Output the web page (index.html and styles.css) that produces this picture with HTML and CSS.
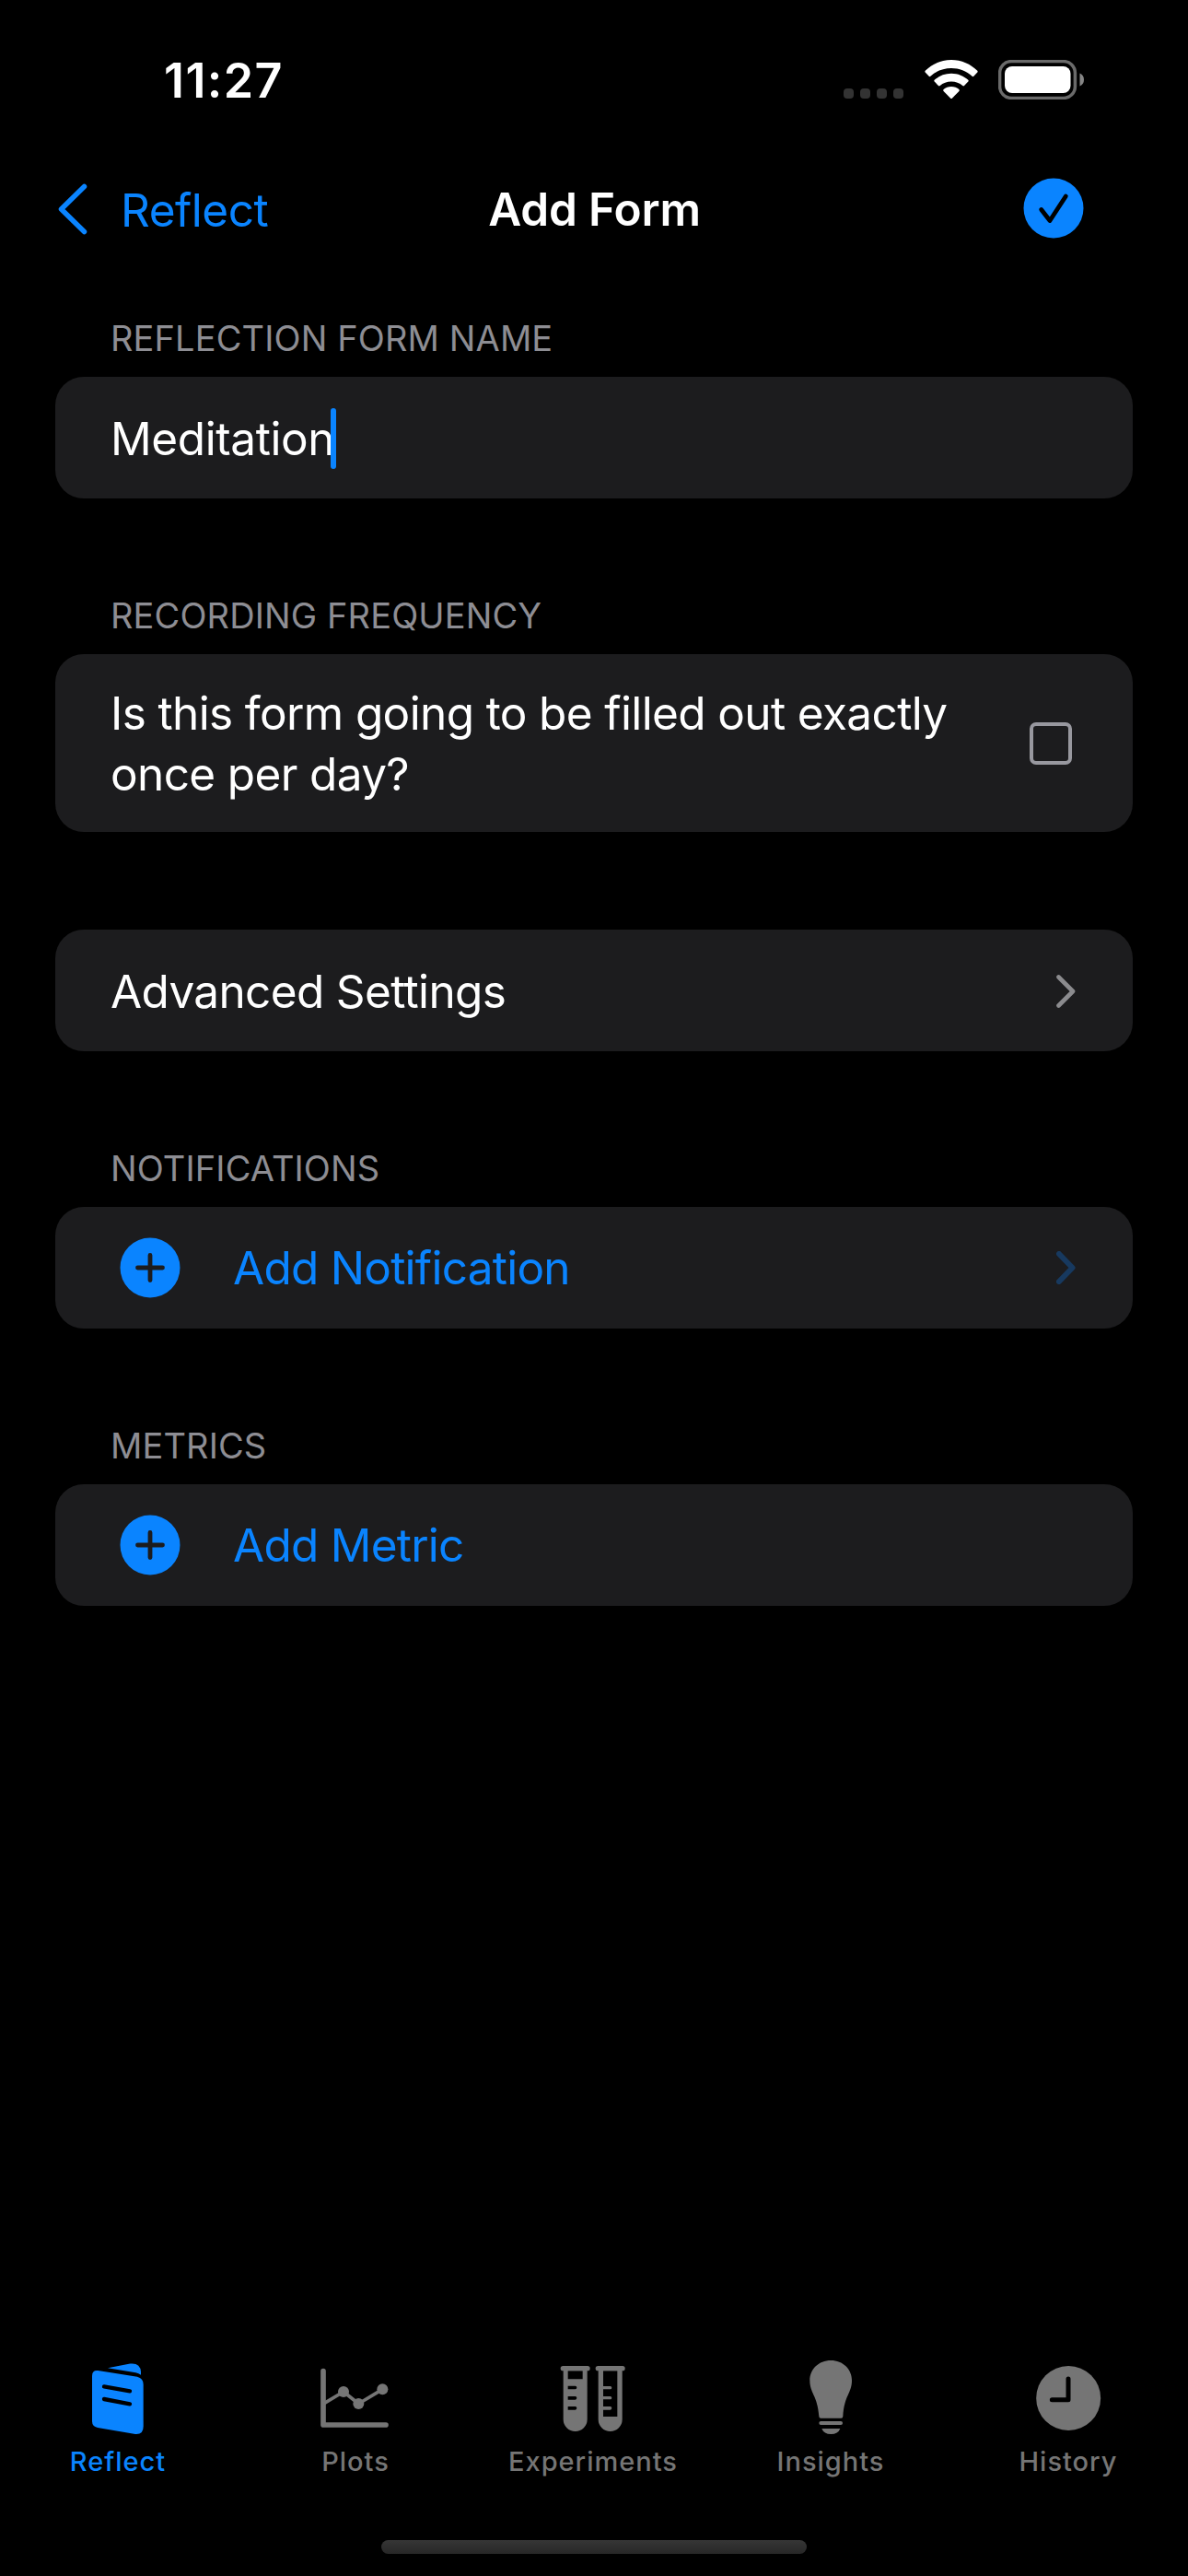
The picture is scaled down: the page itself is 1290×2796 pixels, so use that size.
FILE: index.html
```html
<!DOCTYPE html>
<html lang="en">
<head>
<meta charset="utf-8">
<title>Add Form</title>
<link rel="stylesheet" href="styles.css">
</head>
<body>
<div class="statusbar">
  <div class="time">11:27</div>
  <div class="status-icons">
    <svg class="signal" width="65" height="11" viewBox="0 0 65 11"><rect width="11" height="11" rx="4"/><rect x="18" width="11" height="11" rx="4"/><rect x="36" width="11" height="11" rx="4"/><rect x="54" width="11" height="11" rx="4"/></svg>
    <svg class="wifi" width="58" height="43" viewBox="0 0 58 43"><path d="M29 0C40 0 50 4.500 57.300 11.800Q58 12.700 57.300 13.600L53.300 17.800Q52.500 18.500 51.600 17.700C45.500 12 37.500 9 29 9S12.500 12 6.400 17.700Q5.500 18.500 4.700 17.800L.7 13.600Q0 12.700.7 11.800C8 4.500 18 0 29 0Z"/><path d="M29 14.700C36.200 14.700 42.500 17.500 47.300 21.800Q48.100 22.700 47.300 23.600L43 28Q42.200 28.800 41.300 28C38 25.200 33.700 23.500 29 23.500S20 25.200 16.700 28Q15.800 28.800 15 28L10.700 23.600Q9.900 22.700 10.700 21.800C15.500 17.500 21.800 14.700 29 14.700Z"/><path d="M29 29C32.300 29 35.200 30.200 37.400 32Q38.300 33 37.400 34L30 41.500Q29 42.500 28 41.500L20.600 34Q19.700 33 20.600 32C22.800 30.200 25.700 29 29 29Z"/></svg>
    <svg class="battery" width="94" height="43" viewBox="0 0 94 43"><rect class="battery-case" x="1.600" y="1.600" width="81.800" height="39.800" rx="12.500"/><rect x="7" y="7" width="71.500" height="29" rx="8"/><path class="battery-cap" d="M88.500 14.500Q93 16.500 93 21.500T88.500 28.500Z"/></svg>
  </div>
</div>
<header class="navbar">
  <a class="back"><svg width="32" height="56" viewBox="0 0 32 56"><path d="M28.500 3.500L3.500 28L28.500 52.500"/></svg><span>Reflect</span></a>
  <h1 class="title">Add Form</h1>
  <svg class="done" width="66" height="66" viewBox="0 0 66 66"><circle cx="33" cy="33" r="32.500"/><path d="M19.700 34.500L29 46.500L46.300 20"/></svg>
</header>
<main class="form">
  <section>
    <h2 class="label">REFLECTION FORM NAME</h2>
    <div class="card"><span class="field">Meditation</span><span class="caret"></span></div>
  </section>
  <section>
    <h2 class="label">RECORDING FREQUENCY</h2>
    <div class="card tall"><span class="question">Is this form going to be filled out exactly once per day?</span><span class="checkbox"></span></div>
  </section>
  <section>
    <div class="card"><span>Advanced Settings</span><svg class="chevron" width="21" height="36" viewBox="0 0 21 36"><path d="M2.500 2.500L18 18L2.500 33.500"/></svg></div>
  </section>
  <section>
    <h2 class="label">NOTIFICATIONS</h2>
    <div class="card action"><svg class="plus" width="66" height="66" viewBox="0 0 66 66"><circle cx="33" cy="33" r="32.500"/><path d="M19.500 33H46.500M33 19.500V46.500"/></svg><span>Add Notification</span><svg class="chevron link" width="21" height="36" viewBox="0 0 21 36"><path d="M3 3L17.500 18L3 33"/></svg></div>
  </section>
  <section>
    <h2 class="label">METRICS</h2>
    <div class="card action"><svg class="plus" width="66" height="66" viewBox="0 0 66 66"><circle cx="33" cy="33" r="32.500"/><path d="M19.500 33H46.500M33 19.500V46.500"/></svg><span>Add Metric</span></div>
  </section>
</main>
<nav class="tabbar">
  <a class="tab active">
    <svg viewBox="0 0 300 270"><path d="M66 68Q66 49 85 51L213 71Q233 76 233 96V233Q233 260 207 258L84 237Q66 233 66 216Z"/><path d="M117 43L190 28.500Q223 25 225 55V65Q218 59 208 57.500Z"/><path class="cut" d="M105 103L189 118M105 144L189 160"/></svg>
    <span>Reflect</span>
  </a>
  <a class="tab">
    <svg viewBox="0 0 300 270"><path class="axis" d="M45 53V228H249"/><path class="series" d="M49 157L111 120L160 159L238 112"/><circle cx="111" cy="120" r="18"/><circle cx="160" cy="159" r="18"/><circle cx="238" cy="112" r="18"/></svg>
    <span>Plots</span>
  </a>
  <a class="tab">
    <svg viewBox="0 0 300 270"><rect x="44" y="36" width="96" height="16" rx="8"/><path fill-rule="evenodd" d="M53 48H131V210A39 39 0 0 1 53 210ZM68 52V79H116V52ZM68 101V112H92Q97 112 97 106.500T92 101ZM68 135V146H92Q97 146 97 140.500T92 135ZM68 168V179H92Q97 179 97 173.500T92 168Z"/><rect x="158" y="36" width="96" height="16" rx="8"/><path fill-rule="evenodd" d="M167 48H245V210A39 39 0 0 1 167 210ZM183 52V102H206Q211 102 211 107T206 112H183V135H206Q211 135 211 140T206 145H183V168H206Q211 168 211 173.500T206 179H183V201H229V52Z"/></svg>
    <span>Experiments</span>
  </a>
  <a class="tab">
    <svg viewBox="0 0 300 270"><path d="M150.500 18C190 18 219 47 219 83C219 125 194 131 190 200Q190 206 184 206H118Q112 206 112 200C107 131 82 125 82 83C82 47 111 18 150.500 18Z"/><rect x="112" y="216" width="77" height="12" rx="6"/><path d="M121 240H181Q174 258 151 258T121 240Z"/></svg>
    <span>Insights</span>
  </a>
  <a class="tab">
    <svg viewBox="0 0 300 270"><circle cx="150.500" cy="141" r="105"/><path class="cut hands" d="M150 78V146H97"/></svg>
    <span>History</span>
  </a>
</nav>
<div class="home-indicator"></div>
</body>
</html>
```
FILE: styles.css
```css
* { box-sizing: border-box; }
body {
  margin: 0;
  width: 1290px;
  height: 2796px;
  display: flex;
  flex-direction: column;
  overflow: hidden;
  background: #000;
  color: #fff;
  font-family: Inter, "Liberation Sans", sans-serif;
  font-size: 49.5px;
  letter-spacing: -0.65px;
}
svg { display: block; flex: none; }
h1, h2 { margin: 0; }

.statusbar {
  height: 150px;
  padding: 58px 112px 0 178px;
  display: flex;
  justify-content: space-between;
  align-items: flex-start;
}
.time { font-size: 52px; font-weight: 600; line-height: 60px; letter-spacing: 1.4px; }
.status-icons { display: flex; align-items: flex-end; margin-top: 7px; fill: #fff; }
.signal { fill: #333; margin-bottom: 1px; }
.wifi { margin-left: 23px; }
.battery { margin-left: 22px; }
.battery-case { fill: none; stroke: #6a6a6a; stroke-width: 3.5; }
.battery-cap { fill: #868686; }

.navbar {
  height: 153px;
  padding: 0 113px 0 63px;
  display: grid;
  grid-template-columns: 350px 1fr 350px;
  align-items: center;
}
.back { display: flex; align-items: center; gap: 36px; color: #0a84ff; line-height: 60px; letter-spacing: -0.5px; }
.back span { margin-top: 3px; }
.back path { fill: none; stroke: #0a84ff; stroke-width: 5.5; stroke-linecap: round; stroke-linejoin: round; }
.title {
  font-size: 49.5px;
  font-weight: 600;
  line-height: 60px;
  letter-spacing: -0.15px;
  text-align: center;
  margin: 0 -51px 0 0;
}
.done { justify-self: end; margin-top: -1px; }
.done circle { fill: #0a84ff; }
.done path { fill: none; stroke: #000; stroke-width: 4.8; stroke-linecap: round; stroke-linejoin: round; }

.form { flex: 1; padding: 40px 60px 0; }
.form section + section { margin-top: 103px; }
.form section:nth-child(3) { margin-top: 106px; }
.label {
  padding-left: 60px;
  margin-bottom: 18px;
  font-size: 38px;
  font-weight: 400;
  line-height: 48px;
  letter-spacing: 0.12px;
  color: #8d8d93;
}
.card {
  height: 132px;
  padding: 1px 60px 0;
  display: flex;
  align-items: center;
  border-radius: 31px;
  background: #1c1c1e;
  line-height: 66px;
}
.card.tall { height: 193px; padding: 0 66px 0 60px; justify-content: space-between; }
.field { letter-spacing: -0.4px; }
.caret { width: 6px; height: 66px; margin-left: -4px; border-radius: 3px; background: #0a84ff; }
.question { width: 940px; letter-spacing: -0.63px; }
.checkbox { width: 46px; height: 46px; border: 4px solid #98989f; border-radius: 7px; }
.chevron { margin: 0 2px 0 auto; }
.chevron path { fill: none; stroke: #8b8b8e; stroke-width: 4.6; stroke-linecap: round; stroke-linejoin: round; }
.chevron.link path { stroke: #17395f; stroke-width: 6; }
.card.action { padding: 0 60px 1px 70px; color: #0a84ff; letter-spacing: -0.75px; }
.plus { margin-right: 57px; }
.plus circle { fill: #0a84ff; }
.plus path { stroke: #1c1c1e; stroke-width: 4.8; stroke-linecap: round; }

.tabbar { display: grid; grid-template-columns: repeat(5, 258px); height: 201px; margin-left: -1px; }
.tab {
  display: flex;
  flex-direction: column;
  align-items: center;
  color: #757575;
  font-size: 29px;
  font-weight: 500;
  line-height: 36px;
  letter-spacing: 1px;
}
.tab.active { color: #0a84ff; }
.tab svg { width: 100px; height: 90px; margin-bottom: 8px; fill: currentColor; }
.axis, .series { fill: none; stroke: currentColor; stroke-linecap: round; stroke-linejoin: round; }
.axis { stroke-width: 17; }
.series { stroke-width: 11; }
.cut { fill: none; stroke: #000; stroke-width: 13; stroke-linecap: round; stroke-linejoin: round; }
.hands { stroke-width: 15; }
.home-indicator {
  width: 462px;
  height: 15px;
  margin: 0 auto 24px;
  border-radius: 8px;
  background: linear-gradient(#363636, #272727);
}
```
